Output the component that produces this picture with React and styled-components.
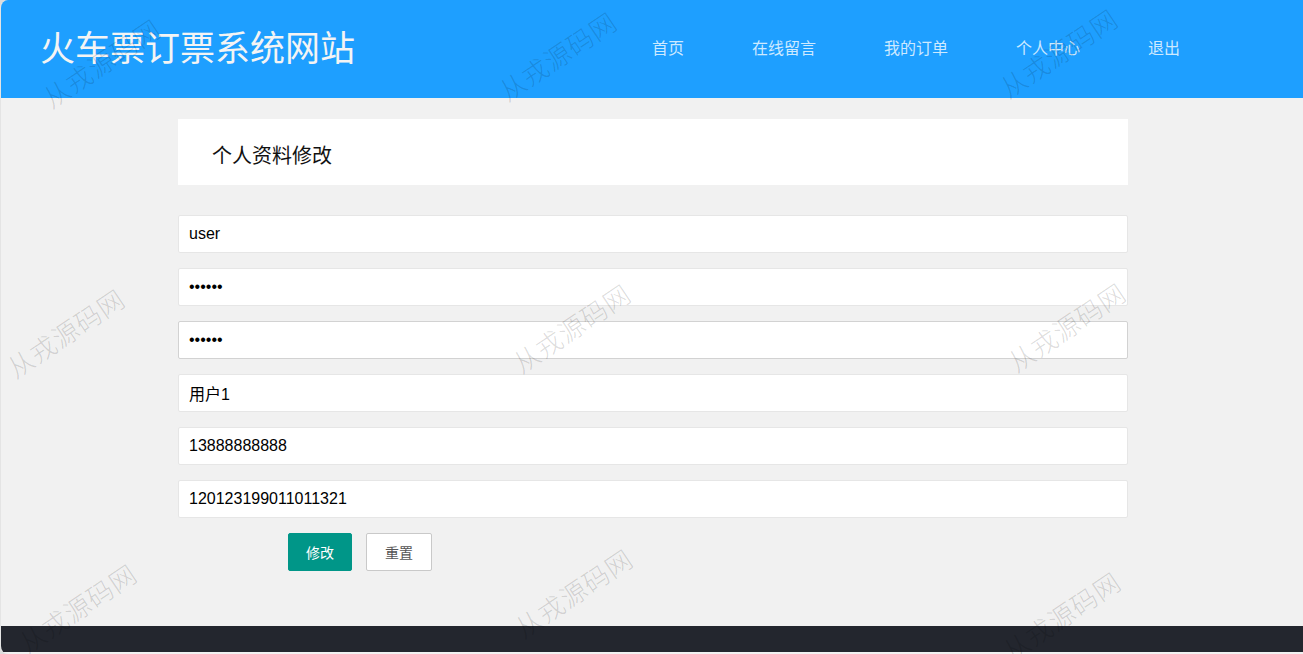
import React from "react";
import styled, { createGlobalStyle } from "styled-components";

const Global = createGlobalStyle`
  html, body { margin: 0; padding: 0; background: #dcdcdc; }
  body { font-family: "Liberation Sans", "Noto Sans CJK SC", sans-serif; }
  * { box-sizing: border-box; }
`;

const Page = styled.div`
  position: relative;
  width: 1303px;
  height: 654px;
  overflow: hidden;
  border-radius: 8px 0 0 8px;
  background: #f1f1f1;
  display: flex;
  flex-direction: column;
  border-left: 1px solid #e4e4e4;
`;

const Header = styled.header`
  height: 98px;
  flex: none;
  background: #1e9fff;
  display: flex;
  align-items: center;
  padding-left: 39px;
`;

const Logo = styled.h1`
  margin: 0;
  font-family: "Noto Sans CJK SC", sans-serif;
  font-weight: 400;
  font-size: 35px;
  color: #f4f4f4;
  width: 578px;
  line-height: 1;
  position: relative;
  top: -4px;
`;

const Nav = styled.nav`
  display: flex;
  align-items: center;
  position: relative;
  top: -2px;
`;

const NavItem = styled.a`
  font-family: "Noto Sans CJK SC", sans-serif;
  font-size: 16px;
  color: rgba(255, 255, 255, 0.78);
  padding: 0 34px;
  text-decoration: none;
  line-height: 98px;
`;

const Main = styled.main`
  flex: none;
  height: 528px;
  padding-top: 21px;
  display: flex;
  justify-content: center;
  padding-left: 2px;
`;

const Container = styled.div`
  width: 950px;
  display: flex;
  flex-direction: column;
`;

const PanelHead = styled.div`
  height: 66px;
  background: #fff;
  display: flex;
  align-items: center;
  padding: 5px 0 0 34px;
  font-family: "Noto Sans CJK SC", sans-serif;
  font-size: 20px;
  color: #111;
  margin-bottom: 30px;
`;

const Form = styled.form`
  display: flex;
  flex-direction: column;
  gap: 15px;
`;

const Input = styled.input`
  height: 38px;
  width: 100%;
  border: 1px solid ${(p) => (p.$active ? "#d2d2d2" : "#e6e6e6")};
  border-radius: 2px;
  background: #fff;
  padding: 0 10px;
  font-family: "Liberation Sans", "Noto Sans CJK SC", sans-serif;
  font-size: 16px;
  color: #000;
  outline: none;
`;

const Actions = styled.div`
  display: flex;
  gap: 14px;
  padding-left: 110px;
`;

const Button = styled.button`
  height: 38px;
  padding: 0 ${(p) => (p.$primary ? "17px" : "18px")};
  border-radius: 2px;
  font-family: "Noto Sans CJK SC", sans-serif;
  font-size: 14px;
  cursor: pointer;
  background: ${(p) => (p.$primary ? "#009688" : "#fff")};
  color: ${(p) => (p.$primary ? "#fff" : "#555")};
  border: 1px solid ${(p) => (p.$primary ? "#009688" : "#c9c9c9")};
`;

const Footer = styled.footer`
  height: 26px;
  flex: none;
  background: #23262e;
`;

const Watermark = styled.span`
  position: absolute;
  left: ${(p) => p.$x}px;
  top: ${(p) => p.$y}px;
  transform: translate(-50%, -50%) rotate(-34deg);
  font-family: "Noto Sans CJK SC", serif;
  font-weight: 300;
  font-size: 26px;
  letter-spacing: 1px;
  color: rgba(0, 0, 0, 0.15);
  white-space: nowrap;
  pointer-events: none;
  z-index: 10;
`;

const marks = [
  [100, 62], [556, 55], [1057, 52],
  [64, 332], [570, 327], [1065, 326],
  [76, 607], [572, 592], [1060, 615],
];

export default function App() {
  return (
    <>
      <Global />
      <Page>
        <Header>
          <Logo>火车票订票系统网站</Logo>
          <Nav>
            <NavItem>首页</NavItem>
            <NavItem>在线留言</NavItem>
            <NavItem>我的订单</NavItem>
            <NavItem>个人中心</NavItem>
            <NavItem>退出</NavItem>
          </Nav>
        </Header>
        <Main>
          <Container>
            <PanelHead>个人资料修改</PanelHead>
            <Form onSubmit={(e) => e.preventDefault()}>
              <Input defaultValue="user" />
              <Input type="password" defaultValue="123456" />
              <Input type="password" defaultValue="123456" $active />
              <Input defaultValue="用户1" />
              <Input defaultValue="13888888888" />
              <Input defaultValue="120123199011011321" />
              <Actions>
                <Button $primary type="submit">修改</Button>
                <Button type="reset">重置</Button>
              </Actions>
            </Form>
          </Container>
        </Main>
        <Footer />
        {marks.map(([x, y], i) => (
          <Watermark key={i} $x={x} $y={y}>从戎源码网</Watermark>
        ))}
      </Page>
    </>
  );
}
